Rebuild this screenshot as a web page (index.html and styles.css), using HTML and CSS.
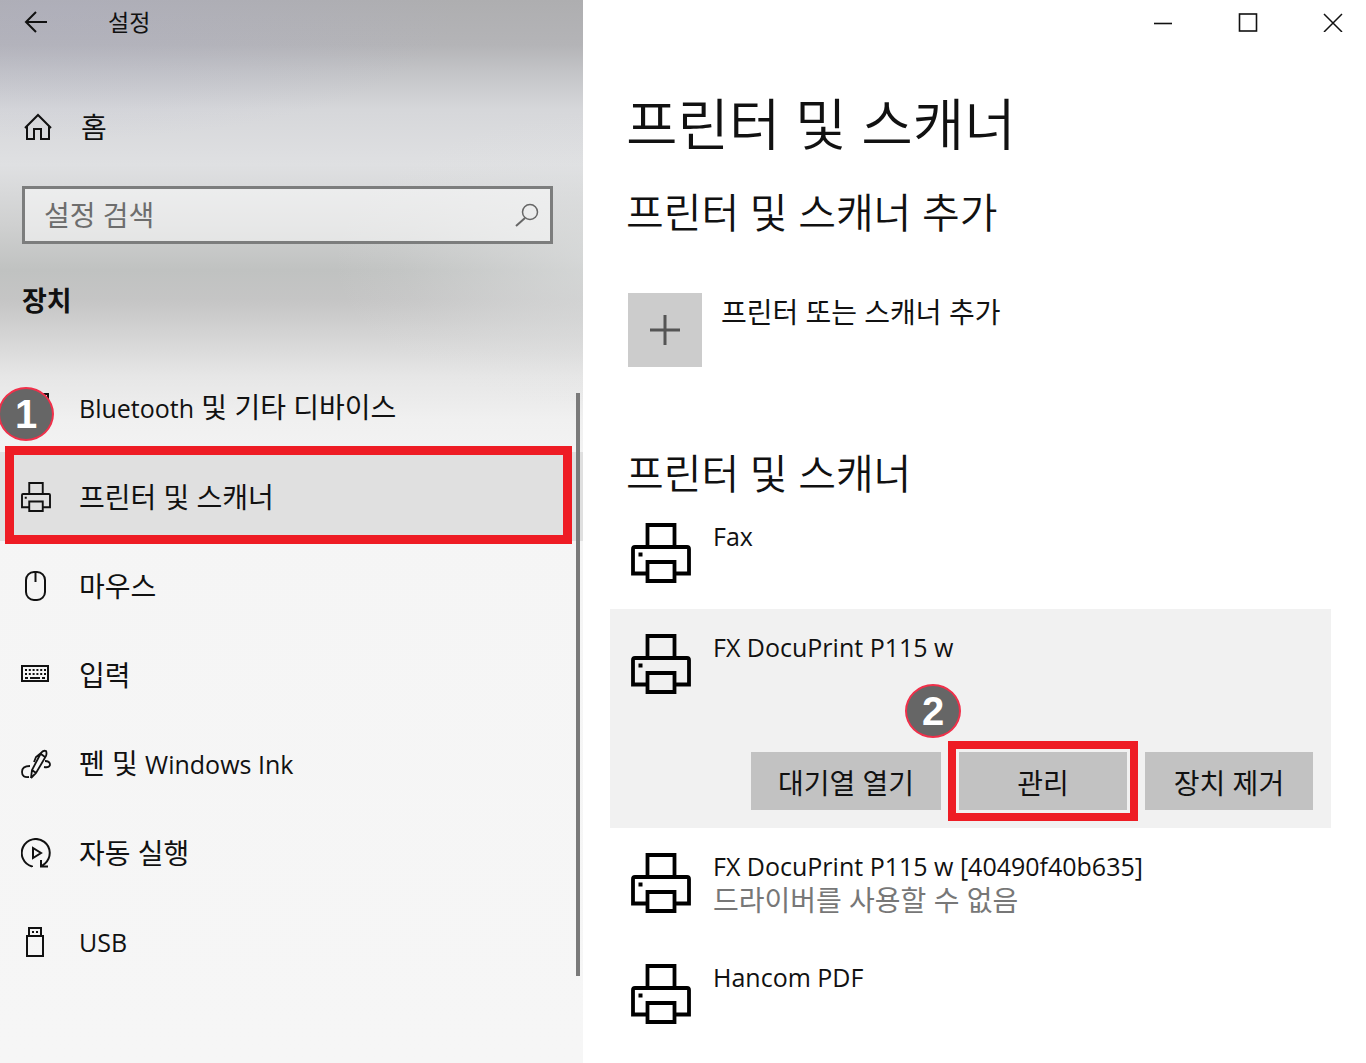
FILE: index.html
```html
<!DOCTYPE html>
<html lang="ko">
<head>
  <meta charset="UTF-8">
  <meta name="viewport" content="width=device-width, initial-scale=1.0">
  <title>설정</title>
  <link rel="stylesheet" href="styles.css">
</head>
<body>
  <svg class="sprite" aria-hidden="true">
    <symbol id="printer" viewBox="0 0 60 60">
      <path d="M16.500 24V2H43.500V24M16.500 50.500H2V26Q2 24 4 24H56Q58 24 58 26V50.500H43.500M16.500 39H43.500V58H16.500Z" fill="none" stroke="currentColor" stroke-width="3.800"/>
      <rect x="7.500" y="29.500" width="4" height="4" fill="currentColor"/>
    </symbol>
  </svg>

  <div class="window">
    <aside class="sidebar">
      <header class="sidebar-title">
        <button class="icon-button" type="button" aria-label="뒤로">
          <svg width="24" height="22" viewBox="0 0 24 22"><path d="M12 1L2 11L12 21M2 11H23" fill="none" stroke="currentColor" stroke-width="2"/></svg>
        </button>
        <span>설정</span>
      </header>

      <a class="home" href="#">
        <svg width="28" height="28" viewBox="0 0 28 28"><path d="M1 15L14 2L27 15M3 13V26H10V16H17V26H25V13" fill="none" stroke="currentColor" stroke-width="2"/></svg>
        <span>홈</span>
      </a>

      <form class="search">
        <input id="search" type="text" placeholder="설정 검색" aria-label="설정 검색">
        <label for="search">
          <svg width="24" height="24" viewBox="0 0 24 24"><circle cx="15" cy="9" r="7.500" fill="none" stroke="currentColor" stroke-width="1.500"/><path d="M10 15L1 23" stroke="currentColor" stroke-width="2"/></svg>
        </label>
      </form>

      <h2 class="category">장치</h2>

      <nav class="menu">
        <a class="menu-item" href="#">
          <svg width="30" height="30" viewBox="0 0 30 30"><path d="M14 1H27V29H14Z" fill="none" stroke="currentColor" stroke-width="2"/></svg>
          <span><span class="latin">Bluetooth</span> 및 기타 디바이스</span>
          <b class="badge badge-menu">1</b>
        </a>
        <a class="menu-item active" href="#">
          <svg width="30" height="30"><use href="#printer"/></svg>
          <span>프린터 및 스캐너</span>
        </a>
        <a class="menu-item" href="#">
          <svg width="30" height="30" viewBox="0 0 30 30"><rect x="5" y="1" width="19" height="28" rx="8" fill="none" stroke="currentColor" stroke-width="2"/><path d="M14.500 1V11" stroke="currentColor" stroke-width="2"/></svg>
          <span>마우스</span>
        </a>
        <a class="menu-item" href="#">
          <svg width="30" height="30" viewBox="0 0 30 30"><rect x="1" y="6" width="26" height="15" fill="none" stroke="currentColor" stroke-width="2"/><path d="M4 10H25M4 14H25" stroke="currentColor" stroke-width="2" stroke-dasharray="2 1.800"/><path d="M4 18H7M9 18H19M21 18H24" stroke="currentColor" stroke-width="2"/></svg>
          <span>입력</span>
        </a>
        <a class="menu-item" href="#">
          <svg width="30" height="30" viewBox="0 0 30 30"><path d="M10 29L11 21L20 4Q22 1 25 2Q26 4 25 7L15 24L10 29M11 21L15 24M20 4L15 8L13 13M20 5L24 8M9 17Q1 17 1 23Q1 29 8 28M24 12Q29 12 29 16Q28 19 23 18" fill="none" stroke="currentColor" stroke-width="1.800"/></svg>
          <span>펜 및 <span class="latin">Windows Ink</span></span>
        </a>
        <a class="menu-item" href="#">
          <svg width="30" height="30" viewBox="0 0 30 30"><path d="M11 29V28.500A14 14 0 1 1 24 25.500L20 28.500M20 22V28.500H27M12 10V20L20 15Z" fill="none" stroke="currentColor" stroke-width="2"/></svg>
          <span>자동 실행</span>
        </a>
        <a class="menu-item" href="#">
          <svg width="30" height="30" viewBox="0 0 30 30"><path d="M8 8V1H20V8M6 9H22V29H6Z" fill="none" stroke="currentColor" stroke-width="2"/><path d="M11 5H13M15 5H17" stroke="currentColor" stroke-width="2"/></svg>
          <span class="latin">USB</span>
        </a>
        <div class="scrollbar"></div>
      </nav>
    </aside>

    <main class="content">
      <div class="window-controls">
        <button class="icon-button" type="button" aria-label="최소화">
          <svg width="20" height="20" viewBox="0 0 20 20"><path d="M1 11.500H19" stroke="currentColor" stroke-width="1.600"/></svg>
        </button>
        <button class="icon-button" type="button" aria-label="최대화">
          <svg width="20" height="20" viewBox="0 0 20 20"><rect x="1.500" y="2" width="17" height="17" fill="none" stroke="currentColor" stroke-width="1.600"/></svg>
        </button>
        <button class="icon-button" type="button" aria-label="닫기">
          <svg width="20" height="20" viewBox="0 0 20 20"><path d="M1 2L19 20M19 2L1 20" stroke="currentColor" stroke-width="1.500"/></svg>
        </button>
      </div>

      <h1>프린터 및 스캐너</h1>

      <h2>프린터 및 스캐너 추가</h2>
      <button class="add-device" type="button">
        <span class="add-icon">
          <svg width="30" height="30" viewBox="0 0 30 30"><path d="M15 0V30M0 15H30" stroke="currentColor" stroke-width="3"/></svg>
        </span>
        <span class="add-text">프린터 또는 스캐너 추가</span>
      </button>

      <h2>프린터 및 스캐너</h2>
      <ul class="devices">
        <li class="device">
          <svg width="60" height="60"><use href="#printer"/></svg>
          <div class="device-info">
            <div class="latin">Fax</div>
          </div>
        </li>
        <li class="device selected">
          <svg width="60" height="60"><use href="#printer"/></svg>
          <div class="device-info">
            <div class="latin">FX DocuPrint P115 w</div>
          </div>
          <div class="device-actions">
            <button type="button">대기열 열기</button>
            <div class="manage">
              <button class="marked" type="button">관리</button>
              <b class="badge badge-manage">2</b>
            </div>
            <button type="button">장치 제거</button>
          </div>
        </li>
        <li class="device">
          <svg width="60" height="60"><use href="#printer"/></svg>
          <div class="device-info">
            <div class="latin">FX DocuPrint P115 w [40490f40b635]</div>
            <div class="device-status">드라이버를 사용할 수 없음</div>
          </div>
        </li>
        <li class="device">
          <svg width="60" height="60"><use href="#printer"/></svg>
          <div class="device-info">
            <div class="latin">Hancom PDF</div>
          </div>
        </li>
      </ul>
    </main>
  </div>
</body>
</html>
```
FILE: styles.css
```css
* {
  box-sizing: border-box;
}

body {
  margin: 0;
  font-family: "Open Sans", "Noto Sans CJK KR", sans-serif;
  font-size: 28px;
  line-height: 34px;
  color: #111;
  background-color: #fff;
}

h1, h2, ul {
  margin: 0;
  padding: 0;
}

h1, h2 {
  font-weight: 350;
}

a {
  color: inherit;
  text-decoration: none;
}

button, input {
  font: inherit;
  color: inherit;
  border: none;
  background: none;
  padding: 0;
}

svg {
  display: block;
  flex-shrink: 0;
}

.sprite {
  display: none;
}

.latin {
  font-size: 25px;
}

.window {
  display: grid;
  grid-template-columns: 583fr 783fr;
  min-height: 100vh;
}

/* Sidebar */
.sidebar {
  background:
    radial-gradient(ellipse 400px 130px at 10% 10px, rgba(175, 175, 205, 0.3), transparent),
    radial-gradient(ellipse 280px 150px at 105% 260px, rgba(226, 228, 228, 0.65), rgba(226, 228, 228, 0.4) 35%, rgba(226, 228, 228, 0.1) 75%, rgba(226, 228, 228, 0)),
    linear-gradient(to bottom, #aeaeb0 0, #b4b4b7 45px, #c5c6c9 75px, #d6d7da 110px, #dfe0e2 165px, #cfd0d0 225px, #c0c2c1 270px, #c5c5c5 300px, #d4d4d4 335px, #e6e6e6 375px, #f0f0f0 420px, #f5f5f5 480px, #f6f6f6 100%);
}

.sidebar-title {
  display: flex;
  align-items: center;
  gap: 60px;
  height: 44px;
  padding-left: 24px;
  font-size: 23px;
}

.icon-button {
  cursor: pointer;
}

.home {
  display: flex;
  align-items: center;
  gap: 29px;
  height: 54px;
  margin-top: 56px;
  padding-left: 24px;
}

.search {
  display: flex;
  align-items: center;
  height: 58px;
  margin: 32px 30px 0 22px;
  padding: 0 11px 0 19px;
  border: 3px solid #7c7d7d;
  background-color: rgba(255, 255, 255, 0.5);
  color: #666;
}

.search input {
  flex: 1;
  min-width: 0;
  outline: none;
}

.search input::placeholder {
  color: #6d6d6d;
  opacity: 1;
}

.category {
  margin-top: 40px;
  padding-left: 22px;
  font-size: 27px;
  font-weight: 700;
}

.menu {
  position: relative;
  margin-top: 45px;
}

.menu-item {
  position: relative;
  display: flex;
  align-items: center;
  gap: 28px;
  height: 89px;
  padding-left: 21px;
}

.menu-item.active {
  background-color: #e0e0e0;
}

.menu-item.active::after {
  content: "";
  position: absolute;
  inset: -6px 11px -3px 5px;
  border: 9px solid #ee1c24;
}

.scrollbar {
  position: absolute;
  top: 30px;
  right: 3px;
  bottom: 10px;
  width: 4px;
  background-color: #7a7a7a;
}

.badge {
  position: absolute;
  display: flex;
  align-items: center;
  justify-content: center;
  width: 56px;
  height: 54px;
  border: 2px solid #f0304a;
  border-radius: 50%;
  background-color: #666;
  color: #fff;
  font-family: "Liberation Sans", Arial, sans-serif;
  font-size: 40px;
}

.badge-menu {
  top: 24px;
  left: -2px;
}

.badge-manage {
  top: -68px;
  left: -54px;
}

/* Content */
.content {
  padding: 0 35px 0 27px;
}

.window-controls {
  display: flex;
  justify-content: flex-end;
  gap: 65px;
  height: 44px;
  margin-right: -12px;
}

h1 {
  margin-top: 44px;
  padding-left: 16px;
  font-size: 56px;
  line-height: 70px;
}

.content h2 {
  padding-left: 16px;
  margin-top: 29px;
  font-size: 41px;
  line-height: 50px;
}

.add-device {
  display: flex;
  gap: 19px;
  margin: 56px 0 81px 18px;
  text-align: left;
  cursor: pointer;
}

.add-icon {
  display: flex;
  align-items: center;
  justify-content: center;
  width: 74px;
  height: 74px;
  background-color: #ccc;
  color: #555;
}

.add-text {
  line-height: 38px;
}

.devices {
  list-style: none;
}

.device {
  display: flex;
  flex-wrap: wrap;
  gap: 22px;
  min-height: 111px;
  padding: 25px 18px 18px 21px;
}

.device svg {
  color: #000;
}

.device-info {
  margin-top: -4px;
}

.selected {
  background-color: #f1f1f1;
}

.device-status {
  color: #777;
}

.device-actions {
  display: flex;
  justify-content: flex-end;
  gap: 18px;
  width: 100%;
  margin-top: 36px;
}

.device-actions button {
  min-width: 168px;
  height: 58px;
  padding: 4px 27px 0;
  background-color: #c2c2c2;
  cursor: pointer;
}

.manage {
  position: relative;
}

.device-actions .marked {
  outline: 8px solid #ee1c24;
  outline-offset: 3px;
}
```
